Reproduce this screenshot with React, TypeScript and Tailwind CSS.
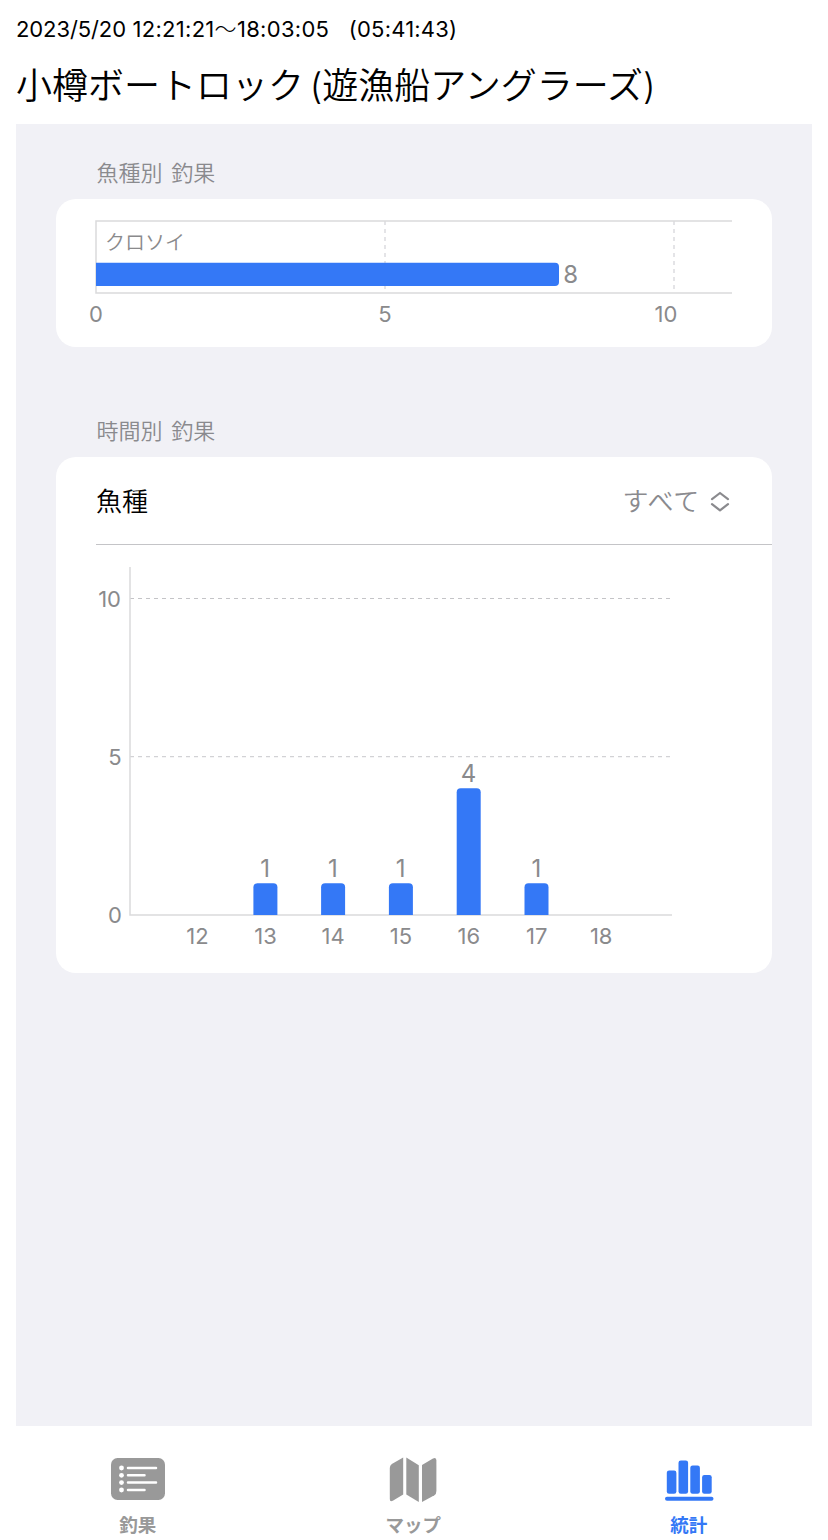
import React from "react";

type Point = { hour: string; x: number; labelX: number; count: number };

const hours: Point[] = [
  { hour: "12", x: 141.6, labelX: 141.5, count: 0 },
  { hour: "13", x: 209.4, labelX: 209.5, count: 1 },
  { hour: "14", x: 277.1, labelX: 277.2, count: 1 },
  { hour: "15", x: 344.9, labelX: 344.9, count: 1 },
  { hour: "16", x: 412.7, labelX: 412.8, count: 4 },
  { hour: "17", x: 480.5, labelX: 480.8, count: 1 },
  { hour: "18", x: 545, labelX: 545.2, count: 0 },
];

const UNIT = 31.7;
const BASE = 370;

function barPath(x: number, top: number, bottom: number) {
  return `M${x - 12} ${bottom}V${top + 4}q0 -4 4 -4h16q4 0 4 4V${bottom}z`;
}

function SpeciesChart() {
  return (
    <svg className="block font-normal" width="716" height="148" viewBox="0 0 716 148">
      <g stroke="#dadadc" strokeWidth="1.5" fill="none">
        <path d="M329 22V94" stroke="#dcdcdf" strokeDasharray="4 4" />
        <path d="M618 22V94" stroke="#dcdcdf" strokeDasharray="4 4" />
        <path d="M676 22H40V94H676" />
      </g>
      <path d="M40 63.7H499q4 0 4 4V83q0 4 -4 4H40z" fill="#3478f6" />
      <g fill="#8a8a8c">
        <text className="font-[350]" x="49" y="50.5" fontSize="20">クロソイ</text>
        <text x="514.8" y="84" fontSize="24" textAnchor="middle">8</text>
        <g fontSize="22" textAnchor="middle">
          <text x="40" y="123">0</text>
          <text x="329" y="123">5</text>
          <text x="610" y="123">10</text>
        </g>
      </g>
    </svg>
  );
}

function HourlyChart() {
  return (
    <svg className="block font-normal" width="716" height="427" viewBox="0 0 716 427">
      <g stroke="#d2d2d5" fill="none">
        <path d="M74 53.5H616" stroke="#c4c4c7" strokeDasharray="4 4" />
        <path d="M74 211.7H616" strokeDasharray="4 4" strokeWidth="1.3" />
        <path d="M74 22V370H616" stroke="#dadadc" strokeWidth="1.5" />
      </g>
      <g fill="#8a8a8c" textAnchor="end" fontSize="22">
        <text x="65" y="62">10</text>
        <text x="65.5" y="220">5</text>
        <text x="65.8" y="378">0</text>
      </g>
      {hours.map((p) => (
        <g key={p.hour} textAnchor="middle" fill="#8a8a8c">
          <text x={p.labelX} y="399" fontSize="22">{p.hour}</text>
          {p.count > 0 && (
            <>
              <path d={barPath(p.x, BASE - p.count * UNIT, BASE)} fill="#3478f6" />
              <text x={p.x - 0.2} y={BASE - p.count * UNIT - 6} fontSize="24">{p.count}</text>
            </>
          )}
        </g>
      ))}
    </svg>
  );
}

function ListIcon() {
  return (
    <svg className="block" width="54" height="44" viewBox="0 0 54 44">
      <rect y="1" width="54" height="42" rx="6.5" fill="#999" />
      <g fill="#fff">
        <circle cx="10.5" cy="11" r="2.4" />
        <circle cx="10.5" cy="18.3" r="2.4" />
        <circle cx="10.5" cy="25.6" r="2.4" />
        <circle cx="10.5" cy="33" r="2.4" />
      </g>
      <path d="M17 11H45M17 18.3H33.5M17 25.6H45M17 33H33.5" stroke="#fff" strokeWidth="2.5" strokeLinecap="round" />
    </svg>
  );
}

function MapIcon() {
  return (
    <svg className="mt-[2px] block" width="48" height="46" viewBox="0 0 48 46" fill="#999">
      <path d="M14.2 .5V37.5L3.8 43.8Q.8 45.2 .8 42V11Q.8 8.3 2.8 7z" />
      <path d="M17.3 .5L29.8 8.3V45L17.3 37.5z" />
      <path d="M33 8L44 1.5Q47.4 -.2 47.4 3.5V34Q47.4 37 45.4 38.3L33 45z" />
    </svg>
  );
}

function StatsIcon() {
  return (
    <svg className="mt-1 block" width="50" height="44" viewBox="0 0 50 44" fill="#3478f6">
      <rect x="2.8" y="11.5" width="9.6" height="23.2" rx="2.3" />
      <rect x="14.5" y="1.5" width="9.6" height="33.2" rx="2.3" />
      <rect x="26.3" y="6.5" width="9.6" height="28.2" rx="2.3" />
      <rect x="38.1" y="16" width="9.6" height="18.7" rx="2.3" />
      <rect x="1" y="37.7" width="48.5" height="4" rx="2" />
    </svg>
  );
}

function Tab({ label, color, children }: { label: string; color: string; children: React.ReactNode }) {
  return (
    <button className={`flex w-[275.5px] flex-col items-center ${color}`}>
      <span className="flex h-[58px] items-center">{children}</span>
      <span className="mt-[5px] h-6 text-[18.5px] leading-6 font-semibold">{label}</span>
    </button>
  );
}

export default function App() {
  return (
    <div className="flex h-[1540px] w-[828px] flex-col overflow-hidden bg-white font-['Inter','Noto_Sans_CJK_JP',sans-serif] font-[350] text-black">
      <header className="h-[124px] shrink-0 px-4 pt-[13px]">
        <div className="h-8 text-[22px] leading-8 font-normal tracking-[0.3px] whitespace-pre">
          <span className="tracking-[-0.1px]">2023/5/20</span> 12:21:21<span className="font-light">〜</span>18:03:05{"   "}
          <span className="tracking-[0.2px]">(05:41:43)</span>
        </div>
        <h1 className="mt-[14px] h-[54px] text-[36px] leading-[54px] [word-spacing:-4.5px] whitespace-pre">小樽ボートロック (遊漁船アングラーズ)</h1>
      </header>
      <main className="mx-4 h-[1302px] shrink-0 bg-[#f1f1f6] px-10">
        <h2 className="h-[75px] pt-[33px] pl-[40.5px] text-[22px] leading-8 [word-spacing:2.5px] text-[#8a8a8e]">魚種別 釣果</h2>
        <section className="h-[148px] rounded-[20px] bg-white">
          <SpeciesChart />
        </section>
        <h2 className="h-[110px] pt-[68px] pl-[40.5px] text-[22px] leading-8 [word-spacing:2.5px] text-[#8a8a8e]">時間別 釣果</h2>
        <section className="h-[516px] rounded-[20px] bg-white">
          <div className="ml-10 flex h-[88px] items-center justify-between border-b border-[#c4c4c7] pt-[2px] pr-[42px] text-[26px]">
            <span>魚種</span>
            <span className="flex items-center gap-[10px] text-[#8a8a8e]">
              <span className="tracking-[0.8px]">すべて</span>
              <svg width="20" height="22" viewBox="0 0 20 22" fill="none" stroke="currentColor" strokeWidth="2.2" strokeLinecap="round" strokeLinejoin="round">
                <path d="M2 8.2L10 2L18 8.2M2 13.2L10 19.4L18 13.2" />
              </svg>
            </span>
          </div>
          <HourlyChart />
        </section>
      </main>
      <nav className="flex h-[114px] shrink-0 pt-6">
        <Tab label="釣果" color="text-[#999]"><ListIcon /></Tab>
        <Tab label="マップ" color="text-[#999]"><MapIcon /></Tab>
        <Tab label="統計" color="text-[#3478f6]"><StatsIcon /></Tab>
      </nav>
    </div>
  );
}
